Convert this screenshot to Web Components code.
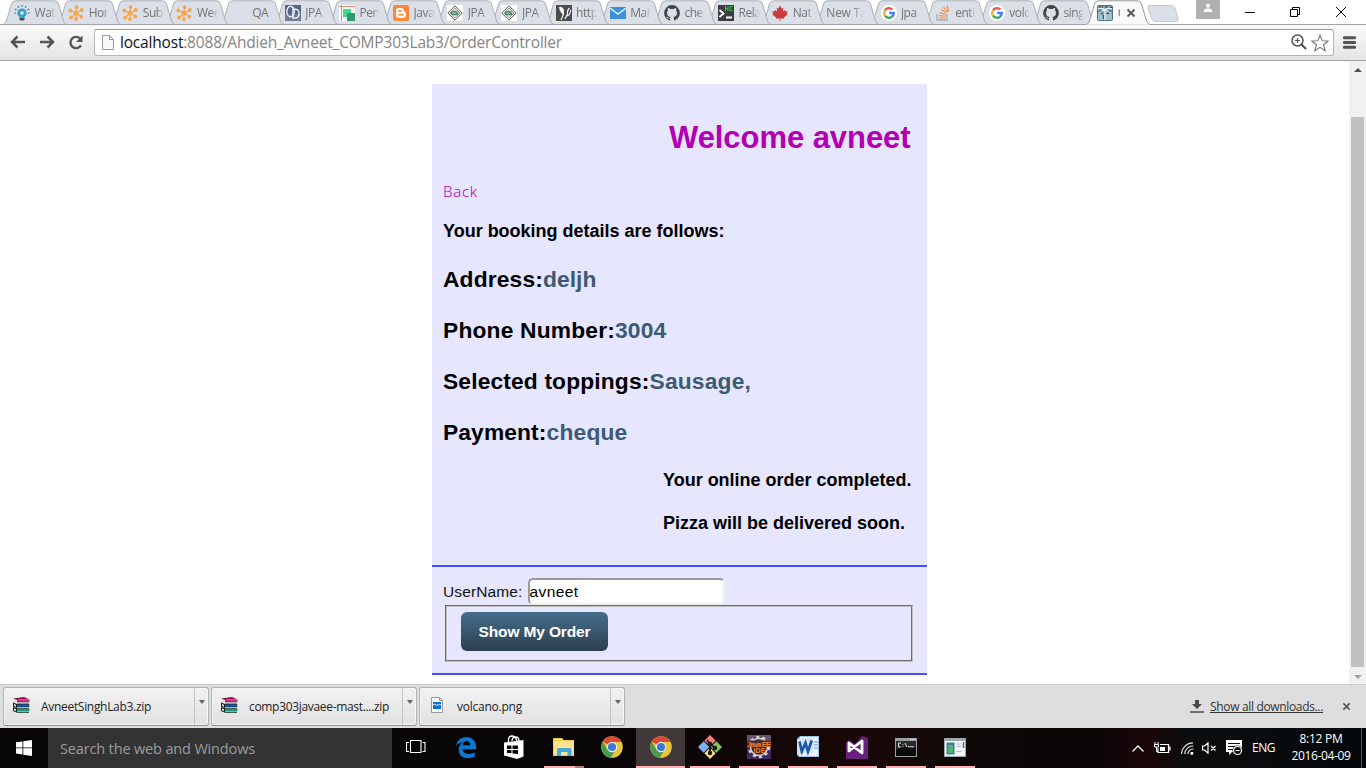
<!DOCTYPE html>
<html lang="en">
<head>
<meta charset="utf-8">
<title>Order</title>
<style>
html,body{margin:0;height:100%;overflow:hidden;background:#fff}
body{font:12px "Open Sans","Noto Sans",sans-serif}
</style>
</head>
<body>
<desktop-screen></desktop-screen>
<script>
const define = (name, css, html, init) => customElements.define(name, class extends HTMLElement {
  connectedCallback() {
    if (this.shadowRoot) return;
    const root = this.attachShadow({mode: 'open'});
    root.innerHTML = `<style>*{box-sizing:border-box}${css}</style>` + (typeof html === 'function' ? html(this) : html);
    if (init) init(this, root);
  }
});

const chrome = `<svg viewBox="0 0 22 22"><circle cx="11" cy="11" r="10.8" fill="#e8c53a"/><path d="M11 11 1.7 5.5A10.8 10.8 0 0 1 20.5 6H11Z" fill="#d9483b"/><path d="M1.7 5.5A10.8 10.8 0 0 0 9.6 21.7L15 13.5 11 11 6 13Z" fill="#4a9a50"/><circle cx="11" cy="11" r="5.2" fill="#f4f1ea"/><circle cx="11" cy="11" r="4.1" fill="#3f78d8"/></svg>`;
const google = `<svg viewBox="0 0 16 16"><circle cx="8" cy="8" r="8" fill="#fff"/><g fill="none" stroke-width="2.4"><path d="M4 5.3A4.8 4.8 0 0 1 11.4 4.5" stroke="#e8534a"/><path d="M4 5.3A4.9 4.9 0 0 0 4 10.7" stroke="#f2b932"/><path d="M4 10.7A4.8 4.8 0 0 0 11 11.8" stroke="#46a85c"/><path d="M11 11.8A4.8 4.8 0 0 0 12.8 8H8.2" stroke="#4a80ea"/></g></svg>`;
const hub = `<svg viewBox="0 0 16 16"><g stroke="#f6a54a" stroke-width="1.1"><path d="M8 8 8.500 2.500M8 8 3 6M8 8 13 5.500M8 8 4 12M8 8 8 14M8 8 12.500 11"/></g><g fill="#f6a54a"><circle cx="8" cy="8" r="2.500"/><circle cx="8.500" cy="2.100" r="1.900"/><circle cx="2.300" cy="5.500" r="1.900"/><circle cx="13.800" cy="5" r="1.900"/><circle cx="3" cy="12.500" r="1.900"/><circle cx="8" cy="14.100" r="1.900"/><circle cx="13.300" cy="11.700" r="1.900"/></g></svg>`;
const jpa = `<svg viewBox="0 0 16 16"><path d="M0 0h16v16H0z" fill="#fff"/><path d="M8 .8 15.200 8 8 15.200.8 8Z" fill="none" stroke="#555"/><path d="M8 3 13 8 8 13 3 8Z" fill="#dfe5df" stroke="#777" stroke-width=".7"/><ellipse cx="8" cy="8" rx="4.500" ry="2.300" fill="#4f8765"/><path d="M5 8h2M8 7v2M9.500 7h2v2" stroke="#d7e8dc" stroke-width=".8" fill="none"/></svg>`;
const cat = `<svg viewBox="0 0 16 16"><circle cx="8" cy="8" r="7.900" fill="#444"/><path d="M6 16v-2.500Q3 14 2.300 11.500q1.500.3 2 1.100.8.800 1.800.3l.4-1C4.200 11.600 3 10.300 3 7.800c0-1 .3-1.800.9-2.400-.2-.7-.2-1.500.1-2.300.9 0 1.700.5 2.300 1 1.100-.3 2.300-.3 3.400 0 .6-.5 1.400-1 2.300-1 .3.8.3 1.600.1 2.300.6.6.9 1.400.9 2.400 0 2.500-1.200 3.800-3.500 4.100q.5.600.5 1.500V16Z" fill="#dbdfe6"/></svg>`;
const rar = `<svg viewBox="0 0 17 16"><path d="M0 1.500 11 0l5.500 2.500H4Z" fill="#8b1643"/><path d="M4 2.500h12.500V5H4z" fill="#d8358e"/><path d="M0 1.500 4 3v3.500h12V5" fill="#25101c"/><path d="M4 3h12v1.700H4z" fill="#cf2f86"/><path d="M4 5.200h12v1H4z" fill="#e8e0d8"/><path d="M0 5.500 4 7h12v4H4L0 9.500Z" fill="#111c25"/><path d="M4 7.500h12.500v2H4z" fill="#1560bd"/><path d="M4 10h12v.8H4z" fill="#e6e9dc"/><path d="M0 10l4 1.200h12v4.500H4L0 14Z" fill="#0b2b21"/><path d="M4 12h12.500v2H4z" fill="#129c78"/><path d="M4 14.300h12v.7H4z" fill="#d5e8dc"/><path d="M1 3l2 .8v2L1 5ZM1 7l2 .8v2L1 9ZM1 11.500l2 .8v2l-2-.8Z" fill="#ddd"/></svg>`;
const icons = {
  hub, google, jpa, cat, rar, chrome,
  bulb: `<svg viewBox="0 0 16 16"><path d="M8 3.500a4.600 4.600 0 0 0-2.600 8.400v1h5.200v-1A4.600 4.600 0 0 0 8 3.500Z" fill="#35a3cf"/><circle cx="8" cy="8" r="1.800" fill="#dbe9ef"/><path d="M5.500 13h5v1.200l-1.500 1.600H7L5.500 14.200Z" fill="#44545e"/><path d="M8 0v2M3.800 1l1 1.700M12.200 1l-1 1.700M.800 4l1.800 1M15.200 4l-1.800 1M.500 8h1.500M14 8h1.500" stroke="#4a6f80" stroke-width="1.100"/></svg>`,
  blank: ``,
  cd: `<svg viewBox="0 0 16 16"><path d="M0 0h16v16H0z" fill="#566583"/><path d="M0 9h16v7H0z" fill="#6f7c9a"/><ellipse cx="5.500" cy="6.500" rx="3.700" ry="5.200" fill="none" stroke="#f1f3f8" stroke-width="1.400"/><path d="M8 2v12M8 4.500q6-1.500 6 4T8 13" fill="none" stroke="#f1f3f8" stroke-width="1.400"/></svg>`,
  pers: `<svg viewBox="0 0 16 16"><path d="M0 0h16v16H0z" fill="#fff"/><path d="M4 4h8v8H4z" fill="#3fd88f"/><path d="M8 8h8v8H8z" fill="#329a70"/><path d="M0 1.500h16M2.500 0v16" stroke="#e28a68"/></svg>`,
  blogger: `<svg viewBox="0 0 16 16"><rect width="16" height="16" rx="2" fill="#fb8938"/><path d="M5.500 3H8q2.700 0 2.700 2.600 0 1 1.300 1.100.8 0 .8.900V10q0 3-3 3H6q-3 0-3-3V5.500Q3 3 5.500 3Z" fill="#fff"/><path d="M5.800 6h2.500M5.800 9.800h4.400" stroke="#fb8938" stroke-width="1.500" stroke-linecap="round"/></svg>`,
  http: `<svg viewBox="0 0 16 16"><path d="M0 0h16v16H0z" fill="#4b4d4e"/><path d="M3 2Q7 1 8 5.500L8 10Q4 8.500 3 2Z" fill="#f1f1f1"/><path d="M7.500 9 5 15M13.500 3q-2.500 2-2 6l-2.500 5M14.500 5q0 5-3.500 6" stroke="#f1f1f1" stroke-width="1.200" fill="none"/></svg>`,
  mail: `<svg viewBox="0 0 16 16"><path d="M0 2h16v12H0z" fill="#3b8fd6"/><path d="M0 3l8 6 8-6" stroke="#e4edf6" stroke-width="1.500" fill="none"/></svg>`,
  hc: `<svg viewBox="0 0 16 16"><path d="M0 0h16v16H0z" fill="#3d3d3f"/><path d="m1.500 5 4 3.500-4 3.500M8 12.500h6" stroke="#fff" stroke-width="1.800" fill="none"/><path d="M7.500 1v5M7.500 3.500h2M10 1v5M14.500 1.500h-2.300v4h2.300" stroke="#45c457" fill="none"/></svg>`,
  maple: `<svg viewBox="0 0 16 16"><path d="m8 .5 1.700 3 1.500-.7-.3 3.700L13 5l.5 1.400 2.300-.1-1 2.500.9.800-3.800 2.900.3 1.300-3.700-.5v2.500h-1v-2.500l-3.700.5.3-1.300L.300 9.600l.9-.8-1-2.500 2.300.1L3 5l2.100 1.500-.3-3.700 1.500.7Z" fill="#c93b40"/></svg>`,
  stack: `<svg viewBox="0 0 16 16"><path d="M2 9v6h10V9" fill="none" stroke="#a9adb2" stroke-width="1.300"/><path d="M4 13h6.300M4 10.600l6.400.6M4.500 7.700l6.200 1.800M6 4.600l5.500 3.300M8.500 2l4.200 5M12 .5l1.700 6" stroke="#f19449" stroke-width="1.200"/></svg>`,
  page: `<svg viewBox="0 0 16 16"><rect x=".5" y=".5" width="15" height="15" rx="1" fill="#7ba3b8" stroke="#4b7388"/><path d="M1 9h14v6H1z" fill="#a3c0cf"/><path d="M1 4q4-2 7 1 3-3 7-1M2 8q3-4 6-2 3-1 6 2M8 5v10" stroke="#f4f8fa" stroke-width="1.200" fill="none"/><path d="M2 2h4M8 2h3M13 2.500h2M1.500 6h3M11.500 6h3M4 9h2M10 8.500h2M6.500 10v4" stroke="#2a4858" stroke-width="1.100"/></svg>`,
  x: `<svg viewBox="0 0 10 10"><path d="m1.500 1.500 7 7m0-7-7 7" stroke="#555" stroke-width="1.800"/></svg>`,
  back: `<svg viewBox="0 0 16 14"><path d="M15 7H2M7.500 1.500 2 7l5.500 5.500" fill="none" stroke="#555" stroke-width="2.500"/></svg>`,
  fwd: `<svg viewBox="0 0 16 14"><path d="M1 7h13M8.500 1.500 14 7l-5.500 5.500" fill="none" stroke="#555" stroke-width="2.500"/></svg>`,
  reload: `<svg viewBox="0 0 16 16"><path d="M13.300 4.300A6 6 0 1 0 13.800 11" fill="none" stroke="#555" stroke-width="2.500"/><path d="M15.500.5v7h-7Z" fill="#555"/></svg>`,
  doc: `<svg viewBox="0 0 12 15"><path d="M.500.500h7l4 4v10H.500Z" fill="#fafafa" stroke="#999"/><path d="M7.500.500v4h4" fill="none" stroke="#999"/></svg>`,
  zoom: `<svg viewBox="0 0 16 16"><circle cx="6.500" cy="6.500" r="5.500" fill="none" stroke="#555" stroke-width="1.500"/><path d="M4 6.500h5M6.500 4v5" stroke="#555" stroke-width="1.200"/><path d="m10.500 10.500 4.500 4.500" stroke="#555" stroke-width="2.300"/></svg>`,
  star: `<svg viewBox="0 0 18 18"><path d="m9 1 2.200 5.800 6 .2-4.700 3.800 1.700 6L9 13.400l-5.200 3.400 1.700-6L.800 7l6-.2Z" fill="#fff" stroke="#777" stroke-width="1.100"/></svg>`,
  menu: `<svg viewBox="0 0 13 13"><path d="M1.200 1.700h10.600M1.200 6.500h10.600M1.200 11.300h10.600" stroke="#555" stroke-width="2.900" stroke-linecap="round"/></svg>`,
  user: `<svg viewBox="0 0 24 19"><path d="M0 0h24v19H0z" fill="#b0b0b0"/><circle cx="12" cy="5.700" r="2" fill="#fff"/><path d="M8 12V10.500Q8 8.500 12 8.500t4 2V12Z" fill="#fff"/></svg>`,
  min: `<svg viewBox="0 0 10 10"><path d="M0 5.500h10" stroke="#000"/></svg>`,
  restore: `<svg viewBox="0 0 10 10"><path d="M.500 2.500h7v7h-7ZM2.500 2.500v-2h7v7h-2" fill="none" stroke="#000"/></svg>`,
  close: `<svg viewBox="0 0 10 10"><path d="m0 0 10 10M10 0 0 10" stroke="#000"/></svg>`,
  png: `<svg viewBox="0 0 12 16"><path d="M.500.500h8l3 3v12H.500Z" fill="#f8f8f8" stroke="#999"/><path d="M8.500.500v3h3" fill="none" stroke="#999"/><path d="M2 5h8v7H2z" fill="#0b6cce"/><path d="m2 7.500 1.500-1 2 1.500 1-1 1 1L9 6.500l1 1v1L9 7.500 7.500 9l-1-1-1 1-2-1.500-1.500 1Z" fill="#e5f2fd"/></svg>`,
  download: `<svg viewBox="0 0 14 13"><path d="M0 12h14" stroke="#4a4a4a" stroke-width="1.500"/><path d="M5 0h4v4h3L7 9 2 4h3Z" fill="#4a4a4a"/></svg>`,
  win: `<svg viewBox="0 0 16 16"><path d="m0 2.300 6.500-.9v6.100H0ZM7.300 1.300 16 0v7.500H7.300ZM0 8.300h6.500v6.200L0 13.600ZM7.300 8.300H16V16l-8.700-1.300Z" fill="#fff"/></svg>`,
  taskview: `<svg viewBox="0 0 20 14"><path d="M4.500.500h10.500v12H4.500ZM3 2.500H.500v9H3M16.500 2.500H19v9h-2.500" fill="none" stroke="#fff" stroke-width="1.100"/></svg>`,
  edge: `<svg viewBox="0 0 20 21"><path d="M0 9.300C.800 3.500 5 0 10.200 0 16.300 0 20 4.300 20 10v2.300H6.500c.3 3.300 3 4.700 6.200 4.700 2.300 0 4.200-.6 6-1.700v4.100c-2 1.100-4.400 1.600-7 1.600-5.700 0-9-3.400-9-8.300 0-3.400 1.700-6.200 5-7.700C4 5.200 1.500 6.700 0 9.300Zm6.700-1h7.500c0-2.700-1.300-4.300-3.600-4.300-2.200 0-3.500 1.700-3.900 4.300Z" fill="#0c78d5"/></svg>`,
  store: `<svg viewBox="0 0 22 24"><path d="M1 7.500 20.500 5v16.500L14 24 1 20.500Z" fill="#fff"/><path d="M5.500 8V4Q6 1 9 1t5 5M9 6Q9 2 12.500 2T16 6" fill="none" stroke="#fff" stroke-width="1.300"/><path d="M4 10.500h4.500V14H4ZM9.500 10.500H15V14H9.500ZM4 15h4.500v3H4ZM9.500 15H15v4l-5.500-.5Z" fill="#090606"/></svg>`,
  folder: `<svg viewBox="0 0 22 18"><path d="M0 1q0-1 1-1h8l2 2h10v16H0Z" fill="#f4c84b"/><path d="M1 3h20v14H1z" fill="#fbe38f"/><path d="M4 18v-6q0-2 2-2h10.500q2 0 2 2v6h-4v-4H8v4Z" fill="#42a9df"/><path d="M2 1h7v1H2z" fill="#fff3bd"/></svg>`,
  git: `<svg viewBox="0 0 24 24"><g transform="rotate(45 12 12)"><path d="M3.500 3.500h8v8h-8z" fill="#f77d76"/><path d="M12.500 3.500h8v8h-8z" fill="#80c564"/><path d="M3.500 12.500h8v8h-8z" fill="#7cb4f2"/><path d="M12.500 12.500h8v8h-8z" fill="#f9dc75"/></g><path d="M9 5l3 4v10M12 9l5 4" stroke="#1c1718" stroke-width="2" fill="none"/><g fill="#1c1718"><circle cx="12" cy="9" r="2.300"/><circle cx="17" cy="13" r="2.200"/><circle cx="12" cy="18" r="2.200"/></g></svg>`,
  ide: `<svg viewBox="0 0 24 24"><path d="M0 0h24v24H0z" fill="#40275d"/><path d="M0 0h24v10H0z" fill="#665368"/><circle cx="12" cy="12" r="9.700" fill="none" stroke="#d5cfd2" stroke-width="3" stroke-dasharray="3 3.100"/><circle cx="12" cy="12" r="8.500" fill="#38292d" stroke="#d5cfd2" stroke-width="1.500"/><path d="M0 5.500h24v6.500H0z" fill="#4a2c3c"/><g fill="#f08023" font-family="Liberation Sans" font-weight="bold"><text x="0" y="11.500" font-size="7.500" textLength="24">Java EE</text><text x="6.500" y="18" font-size="7" textLength="12">IDE</text></g></svg>`,
  word: `<svg viewBox="0 0 22 22"><path d="M3 0h19v21H2L0 19V3Z" fill="#9cc4ea"/><path d="M3 1h18v19H2z" fill="#eef4fc"/><path d="M0 3 16 2v15L0 18Z" fill="#d3e4f6"/><path d="m2.500 5.500 2.300 10L8.500 7l2.500 8.500 3.700-11" fill="none" stroke="#1c58a8" stroke-width="2.700"/><path d="M17 6h4M17 9h4M17 12h4" stroke="#5b90cc"/></svg>`,
  vs: `<svg viewBox="0 0 22 23"><path d="M0 6 3 4l6 4 7-8 6 2v21H0Z" fill="#68217a"/><path d="m3 7 13 10V5L3 15Z" fill="none" stroke="#fff" stroke-width="2.800" stroke-linejoin="round"/></svg>`,
  cmd: `<svg viewBox="0 0 22 19"><path d="M0 0h22v19H0z" fill="#9a9fa3"/><path d="M1 3h20v15H1z" fill="#090909"/><path d="M1 3h20v7Q8 7 1 12Z" fill="#292929"/><path d="M6 5H3.500v4H6M8 6v.8M8 8v.8M10 5l2 4M13 8.800h6" stroke="#e2e2e2" fill="none"/><path d="M15 1.300h5" stroke="#ddd"/></svg>`,
  app: `<svg viewBox="0 0 22 19"><path d="M0 0h22v19H0z" fill="#9ea6ab"/><path d="M1 3h20v15H1z" fill="#f4f5f5"/><path d="M2.500 4.500h8v12h-8z" fill="#397f9d"/><path d="M4 7h5v8H4z" fill="#58af76"/><path d="M12.500 6H17M12.500 8.500H17M12.500 13.500h5" stroke="#b5b9bb"/><path d="M19.500 4v6" stroke="#3f7187" stroke-width="1.500"/></svg>`,
  up: `<svg viewBox="0 0 12 7"><path d="m.5 6.500 5.500-5.500 5.500 5.500" fill="none" stroke="#fff" stroke-width="1.300"/></svg>`,
  battery: `<svg viewBox="0 0 17 12"><path d="M6 2.500h8.500v8H4V6M14.500 5H16v3h-1.500" fill="none" stroke="#fff" stroke-width="1.200"/><path d="M6 5h5v4H6z" fill="#fff"/><path d="M1 0v2.500M4 0v2.500M.500 2.500h4V5h-4ZM2.500 5v4.500H4" fill="none" stroke="#fff"/></svg>`,
  wifi: `<svg viewBox="0 0 13 13"><g fill="none" stroke="#ddd" stroke-width="1.200"><path d="M.500 12A11.500 11.500 0 0 1 12 .800M3.700 12A8.300 8.300 0 0 1 12.500 4M6.800 12A5.500 5.500 0 0 1 12.500 7"/></g><path d="M9.500 10h2.700v2.700H9.500z" fill="#fff"/></svg>`,
  sound: `<svg viewBox="0 0 15 12"><path d="M.600 4h2L6 .800v10.400L2.600 8h-2ZM9 4l4.500 4.500m0-4.500L9 8.500" fill="none" stroke="#fff" stroke-width="1.200"/></svg>`,
  note: `<svg viewBox="0 0 17 16"><path d="M0 0h16v12H6l-3 3v-3H0Z" fill="#fff"/><path d="M2 3.500h12M2 6.500h9M2 9.500h5" stroke="#111" stroke-width="1.200"/><circle cx="11.500" cy="10.500" r="5" fill="#111"/><circle cx="11.500" cy="10.500" r="4" fill="none" stroke="#fff" stroke-width="1.200"/><path d="M9.500 10.500h4" stroke="#fff"/></svg>`
};

define('ui-icon', ':host{display:block;flex:none}svg{display:block;width:100%;height:100%}',
  el => icons[el.getAttribute('name')] || '',
  el => { el.style.width = el.getAttribute('w') + 'px'; el.style.height = (el.getAttribute('h') || el.getAttribute('w')) + 'px'; });

/* Text run whose tracking is adjusted so that it spans the width in the w attribute. */
define('fit-text', ':host{display:inline-block;white-space:pre;flex:none}', '<slot></slot>', el => {
  const w = +el.getAttribute('w'), n = el.textContent.length;
  el.style.letterSpacing = '0px';
  el.style.letterSpacing = (w - el.getBoundingClientRect().width) / n + 'px';
});

define('browser-tab', `
:host{display:grid;width:64px;height:25px;flex:none;margin-right:-9.85px;position:relative}
.bg{grid-area:1/1;width:64px;height:25px;overflow:visible}
.c{grid-area:1/1;display:flex;padding:5px 0 0 11px;gap:4.500px;z-index:1;height:25px}
.t{width:21px;height:18px;margin-top:-1px;overflow:hidden;line-height:17px;color:#747474;white-space:nowrap;letter-spacing:-.45px;
-webkit-mask:linear-gradient(90deg,#000 65%,transparent);mask:linear-gradient(90deg,#000 65%,transparent)}
.t.q{margin-left:1px;-webkit-mask:none;mask:none}
.t.only{width:39px;letter-spacing:-.25px}.a .t{width:2px;color:#37c;-webkit-mask:none;mask:none}.a ui-icon:last-child{margin:3px 0 0 2px}`,
  el => {
    const a = el.hasAttribute('active'), icon = el.getAttribute('icon');
    return `<svg class="bg" viewBox="0 0 64 25"><path d="M0 24.500Q2.500 24 3.500 21L8.500 4Q9.500 .8 12.500.8H51.500Q54.500.8 55.500 4L60.500 21Q61.500 24 64 24.500" fill="${a ? '#f9f9f9' : '#dbdfe7'}" stroke="${a ? '#999' : '#acafb5'}"/>${a ? '<path d="M1 25h62" stroke="#f9f9f9"/>' : '<path d="M0 24.500h64" stroke="#a2a4a8"/>'}</svg>
    <div class="c ${a ? 'a' : ''}">${icon ? `<ui-icon name="${icon}" w="16"></ui-icon>` : ''}<div class="t ${icon ? '' : 'only'} ${icon == 'blank' ? 'q' : ''}"><slot></slot></div>${a ? '<ui-icon name="x" w="10"></ui-icon>' : ''}</div>`;
  });

define('tab-strip', `:host{display:flex;height:25px;background:#fff;border-bottom:1px solid #a2a4a8;padding-left:3px}
.new{width:34px;height:17px;margin:5px 0 0 7px;flex:none}
.win{display:flex;margin-left:15px}`,
  () => {
    const t = [['bulb','Wat'],['hub','Hor'],['hub','Sub'],['hub','Wee'],['blank','QA'],['cd','JPA'],['pers','Pers'],['blogger','Java'],['jpa','JPA'],['jpa','JPA'],['http','http'],['mail','Mai'],['cat','che'],['hc','Rela'],['maple','Nat'],['','New Tab'],['google','jpa'],['stack','enti'],['google','volc'],['cat','sing']];
    return t.map(([i, s], k) => `<browser-tab style="z-index:${30 - k}" icon="${i}">${s}</browser-tab>`).join('') +
    `<browser-tab active style="z-index:40" icon="page">C</browser-tab>
    <svg class="new" viewBox="0 0 34 17"><path d="M3 .5H24Q27 .5 28 3L31 13Q32 16.500 29 16.500H9Q6 16.500 5 14L1 3Q0 .5 3 .5Z" fill="#dbdfe7" stroke="#c9cbd0"/></svg>
    <div class="win"><ui-icon name="user" w="24" h="19"></ui-icon><ui-icon name="min" w="10" style="margin:7px 0 0 25px"></ui-icon><ui-icon name="restore" w="10" style="margin:7px 0 0 35px"></ui-icon><ui-icon name="close" w="10" style="margin:7px 0 0 36px"></ui-icon></div>`;
  });

define('address-bar', `:host{display:flex;height:36px;background:linear-gradient(#f9f9f9,#e5e5e5);border-bottom:1px solid #a0a0a0;padding:4px 10px 4px 10px}
.nav{display:flex;gap:13px;padding-top:6px;width:84px}
.box{flex:1;height:27px;background:#fff;border:1px solid #b4b4b4;border-top-color:#999;border-radius:3px;display:flex;align-items:flex-start;padding:0 4px 0 7px}
.url{font-size:15.500px;line-height:24px;margin-left:6px;flex:1;color:#858585;height:25px}
.url b{color:#111;font-weight:400}`,
`<div class="nav"><ui-icon name="back" w="16" h="14"></ui-icon><ui-icon name="fwd" w="16" h="14"></ui-icon><ui-icon name="reload" w="15" h="15"></ui-icon></div>
<div class="box"><ui-icon name="doc" w="12" h="15" style="margin-top:5px"></ui-icon><div class="url"><fit-text w="442"><b>localhost</b>:8088/Ahdieh_Avneet_COMP303Lab3/OrderController</fit-text></div><ui-icon name="zoom" w="16" style="margin-top:4px"></ui-icon><ui-icon name="star" w="18" style="margin:4px 0 0 4px"></ui-icon></div>
<ui-icon name="menu" w="13" h="13" style="margin:7px 0 0 9px"></ui-icon>`);

define('page-scrollbar', `:host{display:flex;flex-direction:column;width:17px;background:#f1f1f1;align-items:center;padding:7px 0 5px}
i{border:4px solid transparent;border-top:0;border-bottom:4px solid #505050;width:0;height:0}
div{width:13px;height:550px;margin:45px 0 auto;background:#c1c1c1}
i:last-child{border-bottom:0;border-top:4px solid #a3a3a3}`, '<i></i><div></div><i></i>');

define('order-field', `:host{display:block;height:51px;font-weight:700;font-size:22.800px;line-height:26px;color:#000}
span{color:#3d5a73}`,
  el => `<fit-text w="${el.getAttribute('lw')}">${el.getAttribute('label')}:</fit-text><span><fit-text w="${el.getAttribute('vw')}">${el.textContent}</fit-text></span>`);

define('order-card', `:host{display:block;width:495px;height:591px;background:#e6e6ff;font-family:"Liberation Sans",Arial,sans-serif;color:#000}
.main{height:481px;padding:36px 11px 0;display:flex;flex-direction:column}
h1,h4,p{margin:0}
h1{font-size:31px;line-height:36px;height:61px;color:#b200b2;text-align:right;padding-right:5.500px}
.back{color:#b200b2;font:15px/20px "Noto Sans","Open Sans",sans-serif;font-weight:300;height:40px}
h4{font-size:18px;line-height:20px}
.first{height:45px}.r{margin-left:220px;height:43px}
.form{height:110px;border:solid #4c4cff;border-width:2px 0;padding:11px 11px}
.row{display:flex;height:26px;font-size:15.500px;line-height:27px;color:#111}
input{width:197px;height:27px;margin-left:5px;border:2px inset #eee;border-radius:5px;padding:1px 0;font:15.500px "Liberation Sans",sans-serif;letter-spacing:.4px;background:#fff;color:#000}
fieldset{border:2px groove #ccc;border-color:#c0c0c0;width:468px;height:57px;margin:1px 0 0 2px;padding:5px 14px;min-width:0}
button{display:block;width:147px;height:39px;border:0;border-radius:6px;background:linear-gradient(#476e8c,#2b3f4f);color:#fff;font:bold 15.500px "Liberation Sans",sans-serif;padding:1px 0 0}`,
`<div class="main"><h1><fit-text w="241.500">Welcome avneet</fit-text></h1>
<div class="back"><fit-text w="35">Back</fit-text></div>
<h4 class="first"><fit-text w="281.500">Your booking details are follows:</fit-text></h4>
<order-field label="Address" lw="100" vw="53.500">deljh</order-field>
<order-field label="Phone Number" lw="172" vw="51.500">3004</order-field>
<order-field label="Selected toppings" lw="206.500" vw="101.500">Sausage,</order-field>
<order-field label="Payment" lw="103.500" vw="81">cheque</order-field>
<h4 class="r"><fit-text w="248.500">Your online order completed.</fit-text></h4>
<h4 class="r"><fit-text w="242">Pizza will be delivered soon.</fit-text></h4></div>
<div class="form"><div class="row"><fit-text w="79.500">UserName:</fit-text><input value="avneet"></div>
<fieldset><button><fit-text w="112">Show My Order</fit-text></button></fieldset></div>`);

define('web-page', ':host{display:flex;height:623px;background:#fff}main{flex:1;display:flex;justify-content:center;padding:23px 0 0 10px}', '<main><order-card></order-card></main><page-scrollbar></page-scrollbar>');

define('download-item', `:host{display:flex;width:206px;height:39px;border:1px solid #b3b3b3;border-bottom-color:#8e8e8e;border-radius:3px;background:linear-gradient(#f2f2f2,#e1e1e1);box-shadow:inset 0 0 0 1px #f6f6f6;color:#222}
.i{width:28px;margin:9px 0 0 9px}.i.p{padding-left:2px}.n{flex:1;line-height:38px;font-size:12px}
.d{width:14px;border-left:1px solid #c5c5c5;display:flex;justify-content:center;padding-top:12px}
.d i{border:3px solid transparent;border-top:4px solid #666;border-bottom:0;height:0}`,
  el => `<div class="i ${el.getAttribute('icon') == 'png' ? 'p' : ''}"><ui-icon name="${el.getAttribute('icon')}" w="${el.getAttribute('icon') == 'png' ? 12 : 17}" h="16"></ui-icon></div><div class="n"><fit-text w="${el.getAttribute('w')}">${el.textContent}</fit-text></div><div class="d"><i></i></div>`);

define('download-shelf', `:host{display:flex;height:44px;background:#dedede;border-top:1px solid #ccc;padding:2px 0 0 3px;gap:2px}
.all{display:flex;margin:13px 0 0 auto;gap:6px;color:#333;line-height:16px}`,
`<download-item icon="rar" w="110">AvneetSinghLab3.zip</download-item><download-item icon="rar" w="140">comp303javaee-mast....zip</download-item><download-item icon="png" w="65">volcano.png</download-item>
<div class="all"><ui-icon name="download" w="14" h="13"></ui-icon><fit-text w="113" style="text-decoration:underline;margin-top:-1px">Show all downloads...</fit-text></div><ui-icon name="x" w="9" style="margin:15px 15px 0 17px"></ui-icon>`);

define('task-button', `:host{display:grid;width:49px;height:40px;place-items:center;flex:none;grid-template-rows:38px 2px}
:host([run]) i{width:40px;height:2px;background:#ffb0b0}
:host([multi]) i{background:linear-gradient(90deg,#ffb0b0 78%,#b27b7b 0)}
:host([on]){background:#413939}:host([on]) i{width:49px}`,
  el => `<ui-icon name="${el.getAttribute('icon')}" w="${el.getAttribute('w')}" h="${el.getAttribute('h')}"></ui-icon><i></i>`);

define('task-bar', `:host{display:flex;height:40px;background:linear-gradient(90deg,#080506 0,#080506 45%,#120606 55%,#1a0808 64%,#0d0808 72%,#0b0506 80%,#1a0608 84%,#0b0d0e 87%,#05080b 100%);color:#fff}
.start{width:48px;padding:12px 0 0 16px}.search{width:344px;background:#333;color:#9c9c9c;font-size:14.500px;line-height:41px;height:40px;padding-left:12px}
.tray{display:flex;margin-left:auto}.tray>*{flex:none}
.clock{width:60px;text-align:center;line-height:17px;padding-top:2px;margin-left:16px}
.peek{width:5px;border-left:1px solid #555;margin-left:10px}`,
`<div class="start"><ui-icon name="win" w="16"></ui-icon></div><div class="search"><fit-text w="195">Search the web and Windows</fit-text></div>
<task-button icon="taskview" w="20" h="14" style="width:48px"></task-button><task-button icon="edge" w="20" h="21" style="padding-left:3px"></task-button><task-button icon="store" w="22" h="24"></task-button><task-button run multi icon="folder" w="22" h="18" style="padding-left:2px"></task-button><task-button icon="chrome" w="22" h="22" style="padding-left:1px"></task-button><task-button on run icon="chrome" w="22" h="22"></task-button><task-button run icon="git" w="24" h="24"></task-button><task-button run icon="ide" w="24" h="24"></task-button><task-button run icon="word" w="22" h="22"></task-button><task-button run icon="vs" w="22" h="23"></task-button><task-button run icon="cmd" w="22" h="19"></task-button><task-button run icon="app" w="22" h="19"></task-button>
<div class="tray"><ui-icon name="up" w="12" h="7" style="margin-top:17px"></ui-icon><ui-icon name="battery" w="17" h="12" style="margin:14px 0 0 10px"></ui-icon><ui-icon name="wifi" w="13" style="margin:14px 0 0 10px"></ui-icon><ui-icon name="sound" w="15" h="12" style="margin:14px 0 0 8px"></ui-icon><ui-icon name="note" w="17" h="16" style="margin:12px 0 0 9px"></ui-icon><fit-text w="23" style="line-height:39px;margin-left:9px">ENG</fit-text>
<div class="clock"><fit-text w="43">8:12 PM</fit-text><br><fit-text w="59">2016-04-09</fit-text></div><div class="peek"></div></div>`);

define('desktop-screen', ':host{display:flex;flex-direction:column;width:1366px;height:768px;overflow:hidden}', '<tab-strip></tab-strip><address-bar></address-bar><web-page></web-page><download-shelf></download-shelf><task-bar></task-bar>');
</script>
</body>
</html>
